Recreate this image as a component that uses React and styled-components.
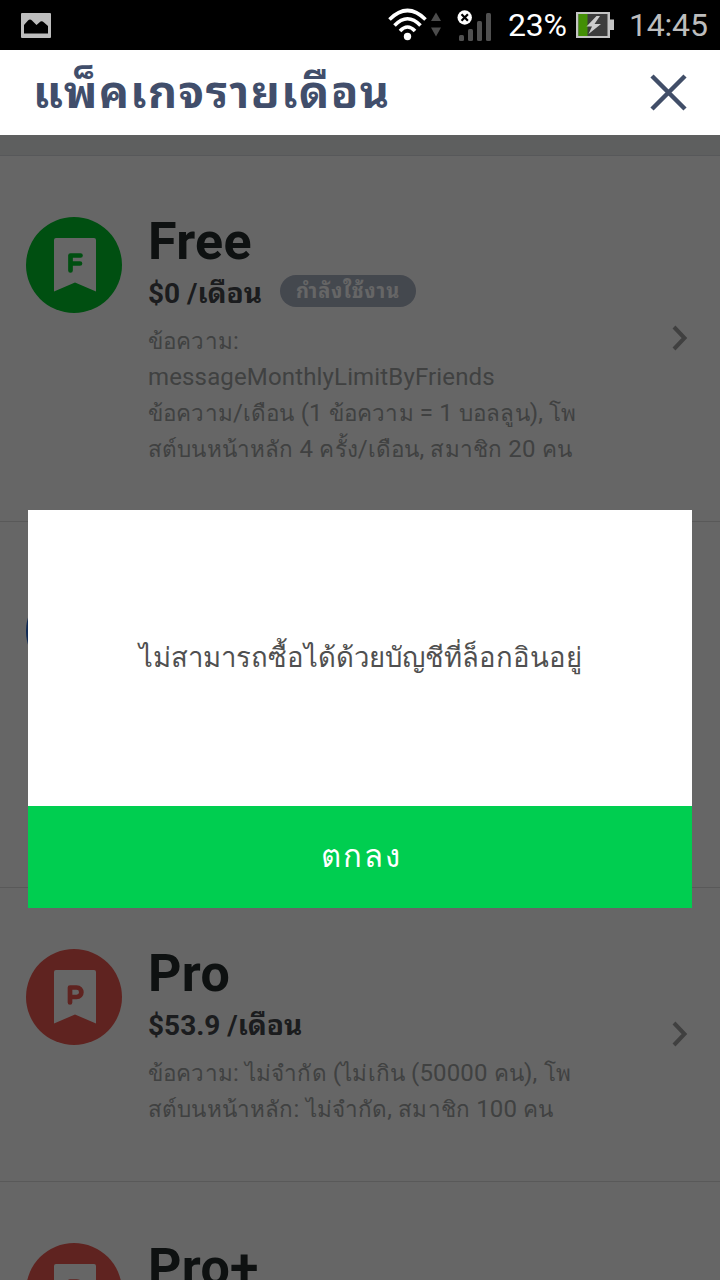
import React from "react";
import { createGlobalStyle, styled } from "styled-components";

const GlobalStyle = createGlobalStyle`
  * {
    box-sizing: border-box;
  }

  body {
    margin: 0;
    font-family: Roboto, "Noto Sans", sans-serif;
  }
`;

const Screen = styled.div`
  display: flex;
  flex-direction: column;
  width: 720px;
  height: 1280px;
  overflow: hidden;
  background: #fff;
`;

const StatusBar = styled.div`
  display: flex;
  align-items: center;
  flex: none;
  height: 50px;
  padding: 0 12px 0 21px;
  background: #000;

  svg {
    display: block;
    flex: none;
  }
`;

const StatusIcons = styled.div`
  display: flex;
  align-items: center;
  margin-left: auto;
`;

const StatusText = styled.span`
  width: ${({ $width }) => $width}px;
  margin-left: 15px;
  color: ${({ $color }) => $color};
  font-size: 32px;
  line-height: 50px;
  letter-spacing: -0.2px;
  white-space: nowrap;
`;

const Header = styled.header`
  display: flex;
  align-items: center;
  justify-content: space-between;
  flex: none;
  height: 85px;
  padding: 0 33px;
  background: #fff;
`;

const Title = styled.h1`
  margin: 0;
  color: #414e6b;
  font-family: Roboto, "Noto Sans Thai Looped", sans-serif;
  font-size: 45px;
  font-weight: 700;
  line-height: 84px;
  letter-spacing: 1.4px;
  white-space: nowrap;
`;

const CloseButton = styled.button`
  display: flex;
  padding: 0;
  border: none;
  background: none;
`;

const Content = styled.main`
  position: relative;
  flex: 1;
  overflow: hidden;
`;

const Strip = styled.div`
  height: 21px;
  border-bottom: 1px solid #d9dce0;
  background: #ebedee;
`;

const Plan = styled.section`
  display: flex;
  height: ${({ $height }) => $height}px;
  padding: 61px 26px 0;
  border-bottom: 1px solid #dfdfdf;
`;

const PlanBody = styled.div`
  flex: 1;
  margin-left: 26px;
  white-space: nowrap;
`;

const PlanName = styled.h2`
  height: 60px;
  margin: -5px 0 0;
  color: #242b2b;
  font-size: 52px;
  font-weight: 700;
  line-height: 60px;
  letter-spacing: 0.3px;
`;

const PriceRow = styled.div`
  display: flex;
  align-items: center;
  height: 44px;
  font-family: Roboto, "Noto Sans Thai Looped", sans-serif;
`;

const Price = styled.span`
  color: #44484b;
  font-size: 28px;
  font-weight: 700;
  line-height: 44px;
`;

const Badge = styled.span`
  display: flex;
  align-items: center;
  justify-content: center;
  width: 136px;
  height: 32px;
  margin: -7px 0 0 18px;
  border-radius: 16px;
  background: #aab3c4;
  color: #fff;
  font-size: 20px;
  font-weight: 700;
  line-height: 32px;
  letter-spacing: 0.9px;
`;

const Description = styled.p`
  display: flex;
  flex-direction: column;
  margin: 7px 0 0;
  color: #a0a4a4;
  font-size: 24px;
  line-height: 36px;
  letter-spacing: 0.15px;
`;

const Line = styled.span`
  height: 36px;
`;

const ThaiText = styled.span`
  font-size: 0.935em;
`;

const Arrow = styled.svg`
  flex: none;
  margin: ${({ $top }) => $top}px 4px 0 0;
`;

const Overlay = styled.div`
  position: absolute;
  inset: 0;
  display: flex;
  align-items: flex-start;
  justify-content: center;
  padding-top: 375px;
  background: rgba(0, 0, 0, 0.6);
`;

const Dialog = styled.div`
  display: flex;
  flex-direction: column;
  width: 664px;
  height: 398px;
  background: #fff;
`;

const Message = styled.p`
  display: flex;
  align-items: center;
  justify-content: center;
  flex: 1;
  margin: 0;
  padding-bottom: 1px;
  color: #505050;
  font-size: 27.5px;
  line-height: 40px;
  white-space: nowrap;
`;

const ConfirmButton = styled.button`
  height: 102px;
  padding: 0 0 0 2px;
  border: none;
  background: #00ce50;
  color: #fff;
  font-family: inherit;
  font-size: 31px;
  line-height: 102px;
  letter-spacing: 2px;
`;

const PictureIcon = () => (
  <svg width="30" height="25" viewBox="0 0 30 25">
    <rect width="30" height="25" rx="1" fill="#bdbdbd" />
    <path d="M3 20.500V12L7 7.500Q9 5.500 11 7.500L15.500 12L19.500 8.500Q21 7.500 23 9.500L27 13V20.500Z" fill="#000" />
  </svg>
);

const WifiIcon = () => (
  <svg width="69" height="34" viewBox="0 0 69 34">
    <g fill="none" stroke="#fff" strokeWidth="3.6">
      <path d="M1.500 11.500Q19.500 -6.500 37.500 11.500" />
      <path d="M6.500 17.500Q19.500 4 32.500 17.500" />
      <path d="M12 23Q19.500 15 27 23" />
    </g>
    <circle cx="19.500" cy="28.500" r="3.700" fill="#fff" />
    <path d="M43 13L48 4.500L53 13ZM43 19.500H53L48 28.500Z" fill="#4c4c4c" />
  </svg>
);

const SignalIcon = () => (
  <svg width="36" height="34" viewBox="0 0 36 34">
    <g fill="#505050">
      <rect x="2" y="27" width="5" height="6" rx="1.500" />
      <rect x="11" y="21" width="5" height="12" rx="1.500" />
      <rect x="20" y="13" width="5" height="20" rx="1.500" />
      <rect x="29" y="5" width="5" height="28" rx="1.500" />
    </g>
    <circle cx="7.700" cy="9.500" r="7.200" fill="#fff" />
    <path d="M4.500 6.300L10.900 12.700M10.900 6.300L4.500 12.700" stroke="#000" strokeWidth="2.200" />
  </svg>
);

const BatteryIcon = () => (
  <svg width="38" height="26" viewBox="0 0 38 26">
    <path d="M0 0H34V7.500H38V18H34V26H0Z" fill="#c4c4c4" />
    <rect x="2.500" y="2" width="29" height="22" fill="#3c3c3c" />
    <rect x="2.500" y="2" width="9" height="22" fill="#438f05" />
    <path d="M20.500 4L10.500 14.500H16L12.500 22L25 12H18.500L24 4Z" fill="#ccc" />
  </svg>
);

const PlanIcon = ({ color, letter }) => (
  <svg width="96" height="96" viewBox="0 0 96 96">
    <circle cx="48" cy="48" r="48" fill={color} />
    <path d="M30 21H68Q70 21 70 23V74.500L49 65.500L28 74.500V23Q28 21 30 21Z" fill="#fff" />
    <g fill="none" stroke={color} strokeWidth="4.700" strokeLinecap="round" strokeLinejoin="round">
      {letter === "F" ? (
        <path d="M54.500 38.500H44.500V53.500M44.500 46.500H54" />
      ) : (
        <path d="M44 53.500V38.500H50.500C57 38.500 57 48 50.500 48H44" />
      )}
    </g>
  </svg>
);

const plans = [
  {
    name: "Free",
    price: "$0 /เดือน",
    active: true,
    color: "#00c52b",
    letter: "F",
    height: 366,
    arrowTop: 108,
    lines: [
      "ข้อความ:",
      "messageMonthlyLimitByFriends",
      "ข้อความ/เดือน (1 ข้อความ = 1 บอลลูน), โพ",
      "สต์บนหน้าหลัก 4 ครั้ง/เดือน, สมาชิก 20 คน",
    ],
  },
  { name: "", price: "", color: "#2869d2", letter: "B", height: 366, arrowTop: 108, lines: [] },
  {
    name: "Pro",
    price: "$53.9 /เดือน",
    color: "#ee5850",
    letter: "P",
    height: 294,
    arrowTop: 72,
    lines: [
      "ข้อความ: ไม่จำกัด (ไม่เกิน (50000 คน), โพ",
      "สต์บนหน้าหลัก: ไม่จำกัด, สมาชิก 100 คน",
    ],
  },
  { name: "Pro+", price: "", color: "#ee5850", letter: "P", height: 294, arrowTop: 72, lines: [] },
];

// Thai runs are set a little smaller than the latin text around them
const renderLine = (line) =>
  line
    .split(/([\u0E00-\u0E7F]+)/)
    .map((part, index) => (index % 2 ? <ThaiText key={index}>{part}</ThaiText> : part));

const App = () => {
  return (
    <Screen>
      <GlobalStyle />
      <StatusBar>
        <PictureIcon />
        <StatusIcons>
          <WifiIcon />
          <SignalIcon />
          <StatusText $width={68} $color="#fff">23%</StatusText>
          <BatteryIcon />
          <StatusText $width={79} $color="#bdbdbd">14:45</StatusText>
        </StatusIcons>
      </StatusBar>
      <Header>
        <Title>แพ็คเกจรายเดือน</Title>
        <CloseButton aria-label="close">
          <svg width="37" height="37" viewBox="0 0 37 37">
            <path d="M2 2L35 35M35 2L2 35" stroke="#414e68" strokeWidth="4.500" />
          </svg>
        </CloseButton>
      </Header>
      <Content>
        <Strip />
        {plans.map((plan, index) => (
          <Plan key={index} $height={plan.height}>
            <PlanIcon color={plan.color} letter={plan.letter} />
            <PlanBody>
              <PlanName>{plan.name}</PlanName>
              <PriceRow>
                <Price>{plan.price}</Price>
                {plan.active && <Badge>กำลังใช้งาน</Badge>}
              </PriceRow>
              <Description>
                {plan.lines.map((line) => (
                  <Line key={line}>{renderLine(line)}</Line>
                ))}
              </Description>
            </PlanBody>
            <Arrow $top={plan.arrowTop} width="18" height="26" viewBox="0 0 18 26">
              <path d="M2 2L12.500 13L2 24" fill="none" stroke="#a0a0a0" strokeWidth="4" />
            </Arrow>
          </Plan>
        ))}
        <Overlay>
          <Dialog>
            <Message>ไม่สามารถซื้อได้ด้วยบัญชีที่ล็อกอินอยู่</Message>
            <ConfirmButton>ตกลง</ConfirmButton>
          </Dialog>
        </Overlay>
      </Content>
    </Screen>
  );
};

export default App;
